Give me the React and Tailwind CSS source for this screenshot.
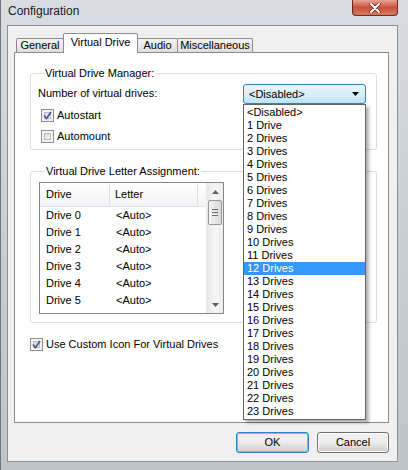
import React from 'react';

const options = ['<Disabled>', '1 Drive'];
for (let i = 2; i <= 23; i++) options.push(i + ' Drives');

const rows = [0, 1, 2, 3, 4, 5];

function CheckBox({ checked }) {
    return (
        <span className="w-[13px] h-[13px] flex-none border border-[#8e8f8f] bg-[#f4f4f4] p-[2px] flex">
            <span className="flex-1 border border-[#b8bcc1] bg-gradient-to-br from-[#d6d8db] to-[#f8f8f8] flex items-center justify-center">
                {checked && (
                    <svg width="9" height="9" viewBox="0 0 9 9" className="-m-[2px]">
                        <path d="M1 4.5 L3.5 7.5 L8 1" fill="none" stroke="#4a5f97" strokeWidth="1.8" />
                    </svg>
                )}
            </span>
        </span>
    );
}

function Tab({ label, width, active, first }) {
    if (active) {
        return (
            <div className={`${width} h-[20px] -mb-px -ml-px relative z-10 bg-white border border-b-0 border-[#898c95] rounded-t-[2px] flex items-center justify-center pb-[2px]`}>
                {label}
            </div>
        );
    }
    return (
        <div className={`${width} h-[14px] ${first ? '' : '-ml-px'} bg-gradient-to-b from-[#f3f3f3] to-[#dedede] border border-b-0 border-[#898c95] rounded-t-[2px] flex items-center justify-center leading-[13px]`}>
            {label}
        </div>
    );
}

function GroupBox({ title, className, children }) {
    return (
        <div className={`border border-[#d5dfe5] rounded-[3px] ${className}`}>
            <div className="-mt-[7px] ml-[6px] px-[1px] w-fit bg-white leading-[13px]">{title}</div>
            {children}
        </div>
    );
}

export default function App() {
    return (
        <div className="w-[408px] h-[470px] flex flex-col bg-gradient-to-b from-[#d9dde1] via-[#c9ced3] to-[#bfc4c9] border-l border-[#6f767d] font-['Liberation_Sans',Arial,sans-serif] text-[11px] text-black select-none">
            {/* title bar */}
            <div className="h-[25px] flex-none flex items-start">
                <div className="flex-1 pl-[7px] pt-[4px] text-[12px] leading-[14px] text-[#1b1b1b]">Configuration</div>
                <div className="w-[46px] h-[16px] mr-[10px] rounded-b-[4px] border border-t-0 border-[#6c2a22] bg-gradient-to-b from-[#e8a493] via-[#c9503f] to-[#d77a5e] flex items-center justify-center">
                    <svg width="12" height="10" viewBox="0 0 12 10">
                        <path d="M2 1 L10 9 M10 1 L2 9" stroke="#5a2018" strokeWidth="3.4" strokeLinecap="round" />
                        <path d="M2 1 L10 9 M10 1 L2 9" stroke="#ffffff" strokeWidth="2" strokeLinecap="round" />
                    </svg>
                </div>
            </div>

            <div className="flex-1 flex pl-[6px] pr-[10px] pb-[8px]">
                {/* client area */}
                <div className="flex-1 flex flex-col bg-[#f0f0f0] border border-[#8a9096] pl-[6px] pt-[7px]">
                    {/* tabs */}
                    <div className="w-[375px] flex items-end pl-[2px]">
                        <Tab label="General" width="w-[48px]" first />
                        <Tab label="Virtual Drive" width="w-[75px]" active />
                        <Tab label="Audio" width="w-[41px]" />
                        <Tab label="Miscellaneous" width="w-[76px]" />
                    </div>

                    {/* tab panel */}
                    <div className="w-[375px] h-[371px] flex-none bg-white border border-[#898c95] pt-[20px] pl-[15px] pr-[11px] flex flex-col">
                        <GroupBox title="Virtual Drive Manager:" className="pl-[7px] pr-[10px] pb-[6px]">
                            <div className="mt-[4px] h-[20px] flex items-center justify-between">
                                <span className="-mt-[2px]">Number of virtual drives:</span>
                                <div className="relative w-[123px] h-[20px]">
                                    <div className="h-full rounded-[3px] border border-[#3c7fb1] bg-gradient-to-b from-[#ecf7fd] via-[#d8effc] to-[#bde4f8] flex items-center pl-[5px] pr-[6px]">
                                        <span className="flex-1">&lt;Disabled&gt;</span>
                                        <svg width="7" height="4" viewBox="0 0 7 4">
                                            <path d="M0 0 H7 L3.5 4 Z" fill="#000" />
                                        </svg>
                                    </div>
                                    {/* open list */}
                                    <div className="absolute top-full left-0 w-[123px] z-20 bg-white border border-[#646464] py-px shadow-[3px_3px_3px_rgba(0,0,0,0.3)]">
                                        {options.map((o) => (
                                            <div
                                                key={o}
                                                className={`h-[13px] leading-[13px] pl-[3px] ${o === '12 Drives' ? 'bg-[#3399ff] text-white' : ''}`}
                                            >
                                                {o}
                                            </div>
                                        ))}
                                    </div>
                                </div>
                            </div>
                            <label className="mt-[4px] h-[14px] flex items-center gap-[3px] pl-[3px]">
                                <CheckBox checked />
                                <span>Autostart</span>
                            </label>
                            <label className="mt-[7px] h-[14px] flex items-center gap-[3px] pl-[3px]">
                                <CheckBox />
                                <span>Automount</span>
                            </label>
                        </GroupBox>

                        <GroupBox title="Virtual Drive Letter Assignment:" className="mt-[21px] pl-[8px] pb-[8px]">
                            {/* list view */}
                            <div className="mt-[4px] w-[185px] h-[132px] border border-[#828790] flex overflow-hidden">
                                <div className="flex-1 flex flex-col overflow-hidden">
                                    <div className="h-[24px] flex-none flex bg-gradient-to-b from-white to-[#f2f3f5] border-b border-[#e2e3e5]">
                                        <div className="w-[70px] pl-[6px] flex items-center border-r border-[#dedfe1]">Drive</div>
                                        <div className="w-[88px] pl-[5px] flex items-center border-r border-[#dedfe1]">Letter</div>
                                    </div>
                                    {rows.map((n) => (
                                        <div key={n} className="h-[17px] flex-none flex items-center">
                                            <span className="w-[70px] pl-[6px]">Drive {n}</span>
                                            <span className="pl-[6px]">&lt;Auto&gt;</span>
                                        </div>
                                    ))}
                                </div>
                                {/* scrollbar */}
                                <div className="w-[17px] flex-none flex flex-col bg-gradient-to-r from-[#e8e8e8] via-[#f6f6f6] to-[#ececec] border-l border-[#eeeeee]">
                                    <div className="h-[17px] flex items-center justify-center">
                                        <svg width="7" height="4" viewBox="0 0 7 4">
                                            <path d="M0 4 L3.5 0 L7 4 Z" fill="#606060" />
                                        </svg>
                                    </div>
                                    <div className="mx-[1px] h-[25px] rounded-[2px] border border-[#979797] bg-gradient-to-r from-[#f5f5f5] to-[#d9d9d9] flex flex-col items-center justify-center gap-[2px]">
                                        <span className="w-[6px] h-px bg-[#6b6b6b]" />
                                        <span className="w-[6px] h-px bg-[#6b6b6b]" />
                                        <span className="w-[6px] h-px bg-[#6b6b6b]" />
                                    </div>
                                    <div className="flex-1" />
                                    <div className="h-[17px] flex items-center justify-center">
                                        <svg width="7" height="4" viewBox="0 0 7 4">
                                            <path d="M0 0 H7 L3.5 4 Z" fill="#606060" />
                                        </svg>
                                    </div>
                                </div>
                            </div>
                        </GroupBox>

                        <label className="mt-[14px] h-[14px] flex items-center gap-[3px]">
                            <CheckBox checked />
                            <span>Use Custom Icon For Virtual Drives</span>
                        </label>
                    </div>

                    {/* buttons */}
                    <div className="w-[375px] mt-[9px] flex justify-end gap-[8px]">
                        <button className="w-[73px] h-[21px] rounded-[3px] border border-[#3c7fb1] shadow-[inset_0_0_0_1px_#48d3fb] bg-gradient-to-b from-[#f2f2f2] via-[#ebebeb] to-[#cfcfcf]">
                            OK
                        </button>
                        <button className="w-[72px] h-[21px] rounded-[3px] border border-[#707070] shadow-[inset_0_0_0_1px_#fcfcfc] bg-gradient-to-b from-[#f2f2f2] via-[#ebebeb] to-[#cfcfcf]">
                            Cancel
                        </button>
                    </div>
                </div>
            </div>
        </div>
    );
}
